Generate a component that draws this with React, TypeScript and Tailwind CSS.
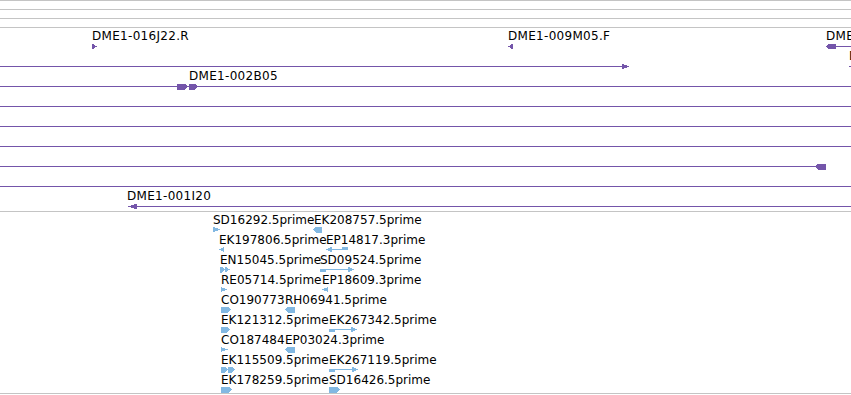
import React from "react";

const P = "#7455aa";
const B = "#82b8e2";

type Label = { x: number; t: string };
type Row = { labels: Label[]; glyphs: React.ReactNode };

const hline = (x1: number, x2: number, y: number, c: string, key?: string) => (
  <rect key={key} x={x1} y={y} width={x2 - x1} height={1} fill={c} />
);
const triR = (x: number, cy: number, w: number, h: number, c: string) => (
  <polygon points={`${x},${cy - h / 2} ${x + w},${cy} ${x},${cy + h / 2}`} fill={c} />
);
const triL = (x: number, cy: number, w: number, h: number, c: string) => (
  <polygon points={`${x + w},${cy - h / 2} ${x},${cy} ${x + w},${cy + h / 2}`} fill={c} />
);
const blockR = (x1: number, x2: number, cy: number, h: number, c: string) => (
  <polygon
    points={`${x1},${cy - h / 2} ${x2 - 3},${cy - h / 2} ${x2},${cy} ${x2 - 3},${cy + h / 2} ${x1},${cy + h / 2}`}
    fill={c}
  />
);
const blockL = (x1: number, x2: number, cy: number, h: number, c: string) => (
  <polygon
    points={`${x1},${cy} ${x1 + 3},${cy - h / 2} ${x2},${cy - h / 2} ${x2},${cy + h / 2} ${x1 + 3},${cy + h / 2}`}
    fill={c}
  />
);

const L = 18;
const C1 = 18.5;

const track1: Row[] = [
  {
    labels: [
      { x: 92, t: "DME1-016J22.R" },
      { x: 508, t: "DME1-009M05.F" },
      { x: 826, t: "DME1-010K14.R" },
    ],
    glyphs: (
      <>
        {triR(92, C1, 5, 6, P)}
        {triL(508, C1, 5, 6, P)}
        {hline(835, 851, L, P)}
        {blockL(826, 836, C1, 5, P)}
      </>
    ),
  },
  {
    labels: [{ x: 849, t: "DME1-004A02" }],
    glyphs: (
      <>
        {hline(0, 623, L, P)}
        {triR(622, C1, 7, 6, P)}
        {triL(849, C1, 3, 3, P)}
      </>
    ),
  },
  {
    labels: [{ x: 189, t: "DME1-002B05" }],
    glyphs: (
      <>
        {hline(0, 851, L, P)}
        {blockR(177, 188, C1, 6, P)}
        {blockR(189, 198, C1, 6, P)}
      </>
    ),
  },
  { labels: [], glyphs: hline(0, 851, L, P) },
  { labels: [], glyphs: hline(0, 851, L, P) },
  { labels: [], glyphs: hline(0, 851, L, P) },
  {
    labels: [],
    glyphs: (
      <>
        {hline(0, 816, L, P)}
        {blockL(815, 826, C1, 6, P)}
      </>
    ),
  },
  { labels: [], glyphs: hline(0, 851, L, P) },
  {
    labels: [{ x: 127, t: "DME1-001I20" }],
    glyphs: (
      <>
        {hline(130, 851, L, P)}
        {triL(128, C1, 9, 6, P)}
      </>
    ),
  },
];

const C2 = 17.5;
const bl = (x1: number, x2: number, left: boolean) => (
  <>
    {hline(x1 + 2, x2 - 2, 17, B)}
    {left ? triL(x1, C2, 6, 6, B) : triR(x2 - 6, C2, 6, 6, B)}
    {left ? (
      <rect x={x2 - 6} y={15} width={6} height={3} fill={B} />
    ) : (
      <rect x={x1} y={17} width={6} height={3} fill={B} />
    )}
  </>
);

const track2: Row[] = [
  {
    labels: [
      { x: 213, t: "SD16292.5prime" },
      { x: 314, t: "EK208757.5prime" },
    ],
    glyphs: (
      <>
        {triR(213, C2, 7, 6, B)}
        {blockL(313, 322, C2, 6, B)}
      </>
    ),
  },
  {
    labels: [
      { x: 219, t: "EK197806.5prime" },
      { x: 326, t: "EP14817.3prime" },
    ],
    glyphs: (
      <>
        {triL(219, C2, 5, 5, B)}
        {bl(326, 348, true)}
      </>
    ),
  },
  {
    labels: [
      { x: 220, t: "EN15045.5prime" },
      { x: 320, t: "SD09524.5prime" },
    ],
    glyphs: (
      <>
        {blockR(220, 225, C2, 6, B)}
        {triR(225, C2, 5, 6, B)}
        {bl(320, 354, false)}
      </>
    ),
  },
  {
    labels: [
      { x: 221, t: "RE05714.5prime" },
      { x: 322, t: "EP18609.3prime" },
    ],
    glyphs: (
      <>
        {triR(221, C2, 6, 5, B)}
        {triL(322, C2, 6, 5, B)}
      </>
    ),
  },
  {
    labels: [
      { x: 221, t: "CO190773" },
      { x: 285, t: "RH06941.5prime" },
    ],
    glyphs: (
      <>
        {blockR(221, 231, C2, 6, B)}
        {blockL(285, 295, C2, 6, B)}
      </>
    ),
  },
  {
    labels: [
      { x: 221, t: "EK121312.5prime" },
      { x: 329, t: "EK267342.5prime" },
    ],
    glyphs: (
      <>
        {blockR(221, 230, C2, 6, B)}
        {bl(329, 357, false)}
      </>
    ),
  },
  {
    labels: [
      { x: 221, t: "CO187484" },
      { x: 285, t: "EP03024.3prime" },
    ],
    glyphs: (
      <>
        {triR(221, C2, 7, 5, B)}
        {blockL(285, 295, C2, 6, B)}
      </>
    ),
  },
  {
    labels: [
      { x: 221, t: "EK115509.5prime" },
      { x: 329, t: "EK267119.5prime" },
    ],
    glyphs: (
      <>
        {blockR(221, 228, C2, 6, B)}
        {blockR(228, 235, C2, 6, B)}
        {bl(329, 358, false)}
      </>
    ),
  },
  {
    labels: [
      { x: 221, t: "EK178259.5prime" },
      { x: 329, t: "SD16426.5prime" },
    ],
    glyphs: (
      <>
        {blockR(221, 232, C2, 6, B)}
        {blockR(329, 340, C2, 6, B)}
      </>
    ),
  },
];

function TrackRow({ row, labelClass }: { row: Row; labelClass: string }) {
  return (
    <div className="relative h-[20px] w-full">
      <svg
        className="absolute left-0 top-0 overflow-visible"
        width={851}
        height={20}
        shapeRendering="crispEdges"
      >
        {row.glyphs}
      </svg>
      {row.labels.map((l) => (
        <span
          key={l.t}
          className={`absolute ${labelClass} whitespace-nowrap text-[12px] leading-[12px] text-black`}
          style={{ left: l.x }}
        >
          {l.t}
        </span>
      ))}
    </div>
  );
}

export default function App() {
  return (
    <div
      className="relative w-[851px] h-[395px] overflow-hidden bg-white"
      style={{ fontFamily: '"DejaVu Sans", "Liberation Sans", sans-serif' }}
    >
      <div className="flex flex-col">
        <div className="h-px bg-[#c4c4c4]" />
        <div className="h-[8px]" />
        <div className="h-px bg-[#c4c4c4]" />
        <div className="h-[8px]" />
        <div className="h-px bg-[#c4c4c4]" />
        <div className="h-[8px]" />
        <div className="h-px bg-[#c4c4c4]" />
        <div className="flex flex-col pb-[3px]">
          {track1.map((r, i) => (
            <TrackRow key={i} row={r} labelClass="top-[2px] tracking-[0.3px]" />
          ))}
        </div>
        <div className="h-px bg-[#c4c4c4]" />
        <div className="flex flex-col pb-[1px]">
          {track2.map((r, i) => (
            <TrackRow key={i} row={r} labelClass="top-[2px]" />
          ))}
        </div>
        <div className="h-px bg-[#c4c4c4]" />
      </div>
    </div>
  );
}
